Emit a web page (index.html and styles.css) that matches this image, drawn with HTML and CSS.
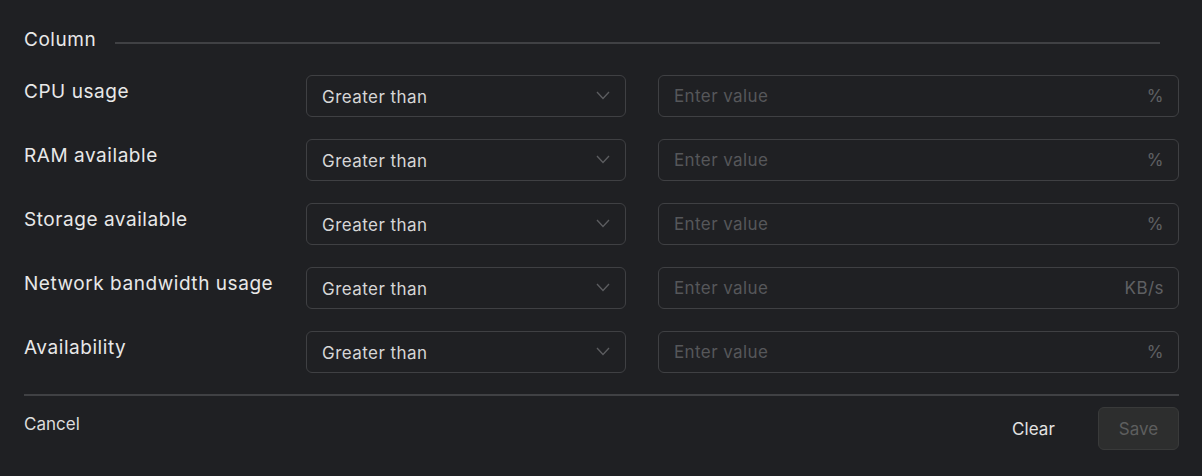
FILE: index.html
```html
<!DOCTYPE html>
<html>
<head>
<meta charset="utf-8">
<link rel="stylesheet" href="styles.css">
</head>
<body>
<div class="panel">
  <div class="header">
    <span class="header-title">Column</span>
    <span class="header-line"></span>
  </div>
  <div class="rows">
    <div class="row">
      <div class="label">CPU usage</div>
      <div class="select"><span>Greater than</span><svg class="chev" width="14" height="9" viewBox="0 0 14 9"><polyline points="1,1 7,7.5 13,1" fill="none" stroke="#5c5d60" stroke-width="1.3"/></svg></div>
      <div class="input"><span class="ph">Enter value</span><span class="unit">%</span></div>
    </div>
    <div class="row">
      <div class="label">RAM available</div>
      <div class="select"><span>Greater than</span><svg class="chev" width="14" height="9" viewBox="0 0 14 9"><polyline points="1,1 7,7.5 13,1" fill="none" stroke="#5c5d60" stroke-width="1.3"/></svg></div>
      <div class="input"><span class="ph">Enter value</span><span class="unit">%</span></div>
    </div>
    <div class="row">
      <div class="label">Storage available</div>
      <div class="select"><span>Greater than</span><svg class="chev" width="14" height="9" viewBox="0 0 14 9"><polyline points="1,1 7,7.5 13,1" fill="none" stroke="#5c5d60" stroke-width="1.3"/></svg></div>
      <div class="input"><span class="ph">Enter value</span><span class="unit">%</span></div>
    </div>
    <div class="row">
      <div class="label">Network bandwidth usage</div>
      <div class="select"><span>Greater than</span><svg class="chev" width="14" height="9" viewBox="0 0 14 9"><polyline points="1,1 7,7.5 13,1" fill="none" stroke="#5c5d60" stroke-width="1.3"/></svg></div>
      <div class="input"><span class="ph">Enter value</span><span class="unit">KB/s</span></div>
    </div>
    <div class="row">
      <div class="label">Availability</div>
      <div class="select"><span>Greater than</span><svg class="chev" width="14" height="9" viewBox="0 0 14 9"><polyline points="1,1 7,7.5 13,1" fill="none" stroke="#5c5d60" stroke-width="1.3"/></svg></div>
      <div class="input"><span class="ph">Enter value</span><span class="unit">%</span></div>
    </div>
  </div>
  <div class="divider"></div>
  <div class="footer">
    <span class="cancel">Cancel</span>
    <div class="actions">
      <span class="clear">Clear</span>
      <span class="save">Save</span>
    </div>
  </div>
</div>
</body>
</html>
```

FILE: styles.css
```css
html, body {
  margin: 0;
  padding: 0;
  background: #1f2023;
}
body {
  font-family: Inter, "Noto Sans", sans-serif;
  color: #e6e6e6;
  width: 1202px;
  height: 476px;
  overflow: hidden;
}
.panel {
  padding: 28px 23px 0 24px;
}
.header {
  display: flex;
  align-items: center;
  height: 24px;
}
.header-title {
  font-size: 19px;
  letter-spacing: 0.55px;
  line-height: 24px;
  color: #e8e8e8;
}
.header-line {
  flex: 1;
  height: 2px;
  background: #404144;
  margin: 6px 19px 0 19px;
}
.rows {
  margin-top: 23px;
  display: flex;
  flex-direction: column;
  gap: 22px;
}
.row {
  display: flex;
  align-items: flex-start;
}
.label {
  width: 282px;
  font-size: 19px;
  letter-spacing: 0.55px;
  line-height: 24px;
  padding-top: 5px;
  color: #e8e8e8;
}
.select, .input {
  box-sizing: border-box;
  height: 42px;
  border: 1px solid #3f4043;
  border-radius: 6px;
  display: flex;
  align-items: center;
  justify-content: space-between;
  font-size: 17px;
  letter-spacing: 0.45px;
}
.select {
  width: 320px;
  padding: 0 15px 0 15px;
  color: #d6d6d6;
}
.select span {
  padding-top: 1px;
}
.chev {
  display: block;
  margin-top: -2px;
}
.input {
  flex: 1;
  margin-left: 32px;
  padding: 0 14px 0 15px;
}
.ph {
  color: #56575a;
  letter-spacing: 0.4px;
}
.unit {
  color: #5f6063;
}
.divider {
  margin-top: 21px;
  height: 2px;
  background: #404144;
}
.footer {
  display: flex;
  justify-content: space-between;
  align-items: flex-start;
  padding-top: 11px;
}
.cancel {
  margin-top: 5px;
  font-size: 17px;
  line-height: 24px;
  color: #dcdcdc;
}
.actions {
  display: flex;
  align-items: center;
}
.clear {
  font-size: 17px;
  letter-spacing: 0.1px;
  color: #e2e2e2;
  margin-right: 43px;
}
.save {
  box-sizing: border-box;
  width: 81px;
  height: 43px;
  border: 1px solid #393a3a;
  border-radius: 6px;
  background: #2d2e2e;
  color: #5d5e5e;
  font-size: 17px;
  display: flex;
  align-items: center;
  justify-content: center;
}
```
